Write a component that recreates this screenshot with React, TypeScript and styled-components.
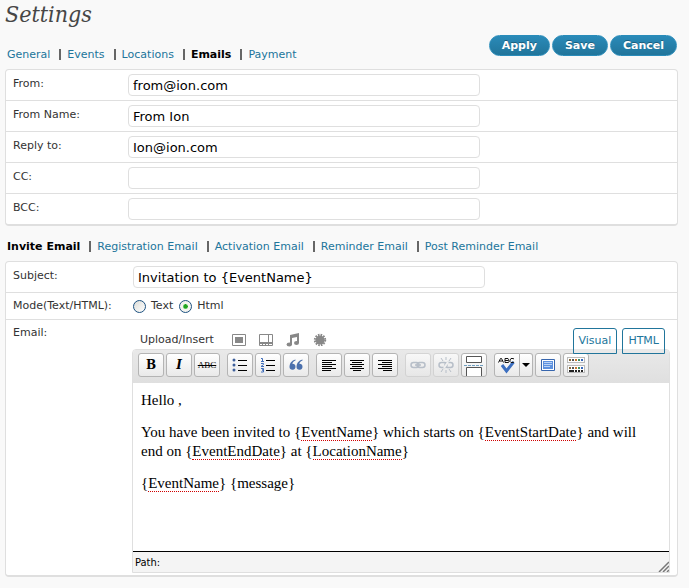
import React, { useState } from "react";
import styled, { createGlobalStyle, css } from "styled-components";

const ui = '"DejaVu Sans", Verdana, sans-serif';
const serif = '"Liberation Serif", Georgia, serif';
const line = "#dfdfdf";
const link = "#21759b";

const GlobalStyle = createGlobalStyle`
  *, *::before, *::after { box-sizing: border-box; }
  body { margin: 0; background: #f9f9f9; color: #333; font: 11px/16px ${ui}; }
`;

const Page = styled.main`
  padding: 0 11px 10px 5px;
`;

const Title = styled.h1`
  margin: 0;
  height: 30px;
  font: italic 23px/28px "DejaVu Serif Condensed", "DejaVu Serif", Georgia, serif;
  color: #464646;
`;

const Header = styled.div`
  display: flex;
  align-items: flex-start;
  justify-content: space-between;
  height: 39px;
  padding-top: 5px;
`;

const Tabs = styled.nav<{ $spaced?: boolean }>`
  display: flex;
  flex-wrap: wrap;
  padding: ${(p) => (p.$spaced ? "13px 2px 6px" : "12px 2px 0")};
`;

const TabItem = styled.span`
  & + &::before {
    content: "";
    display: inline-block;
    width: 2px;
    height: 11px;
    margin: 0 6px 0 9px;
    vertical-align: -2px;
    background: #666;
  }
`;

const TabLink = styled.a<{ $current?: boolean }>`
  color: ${(p) => (p.$current ? "#000" : link)};
  font-weight: ${(p) => (p.$current ? 700 : 400)};
  text-decoration: none;
`;

const Actions = styled.div`
  display: flex;
  gap: 2px;
  padding-right: 1px;
`;

const ActionButton = styled.button`
  height: 21px;
  padding: 0 12px;
  border: 1px solid #298cba;
  border-radius: 11px;
  background: linear-gradient(#2a8ab8, #21759b);
  color: #fff;
  font: bold 11px/19px ${ui};
  text-shadow: 0 -1px 0 rgba(0, 0, 0, 0.3);
`;

const Panel = styled.section`
  border: 1px solid ${line};
  border-bottom-width: 2px;
  border-radius: 4px;
  background: #fff;
`;

const columns = { field: "115px", wide: "120px", radio: "120px", editor: "119px" };
const insets = { field: "4px 7px", wide: "4px 7px", radio: "4px 7px", editor: "4px 7px 2px" };

const Row = styled.div<{ $kind: keyof typeof columns }>`
  display: grid;
  grid-template-columns: ${(p) => columns[p.$kind]} minmax(0, 1fr);
  padding: ${(p) => insets[p.$kind]};
  & + & { border-top: 1px solid ${line}; }
`;

const labelText = css`
  line-height: 18px;
`;
const Label = styled.label`
  line-height: 20px;
`;
const Caption = styled.span`${labelText}`;

const TextInput = styled.input`
  width: 100%;
  max-width: 352px;
  height: 22px;
  padding: 0 4px;
  border: 1px solid ${line};
  border-radius: 4px;
  background: #fff;
  color: #000;
  font: 13px/18px ${ui};
`;

const RadioGroup = styled.div`
  display: flex;
  align-items: center;
  gap: 6px;
  height: 18px;
`;

const RadioLabel = styled.label`
  display: flex;
  align-items: center;
  gap: 5px;
`;

const Radio = styled.input`
  appearance: none;
  width: 13px;
  height: 13px;
  margin: 0;
  border: 1px solid #1c5180;
  border-radius: 50%;
  background: linear-gradient(135deg, #dcdcd7, #fff);
  &:checked {
    background: radial-gradient(circle, #21a121 0 2px, #55c955 2px, #f3f3ef 3px);
  }
`;

const Media = styled.div`
  display: flex;
  align-items: flex-start;
  justify-content: space-between;
  height: 25px;
  padding: 4px 5px 0 8px;
`;

const Uploads = styled.div`
  display: flex;
  align-items: center;
  gap: 13px;
  padding-top: 4px;
`;

const UploadTitle = styled.span`
  min-width: 79px;
`;

const UploadButton = styled.button`
  width: 14px;
  height: 14px;
  padding: 0;
  border: 0;
  background: none;
  color: #888;
  svg { display: block; }
`;

const ModeTabs = styled.div`
  display: flex;
  gap: 5px;
  z-index: 1;
`;

const ModeTab = styled.button`
  height: 26px;
  padding: 0 5px;
  border: 1px solid ${link};
  border-radius: 3px 3px 0 0;
  background: linear-gradient(#fff 0 20px, #e9e9e9 20px);
  color: ${link};
  font: 11px/24px ${ui};
`;

const Frame = styled.div`
  border: 1px solid ${line};
  border-radius: 4px 4px 0 0;
`;

const Toolbar = styled.div`
  display: flex;
  gap: 7px;
  padding: 3px 5px 6px;
  border-radius: 3px 3px 0 0;
  background: linear-gradient(#e9e9e9, #dfdfdf);
`;

const ToolGroup = styled.div`
  display: flex;
  gap: 2px;
`;

const Tool = styled.button`
  display: grid;
  place-items: center;
  width: 26px;
  height: 24px;
  padding: 0;
  border: 1px solid #b4b4b4;
  border-radius: 3px;
  background: linear-gradient(#fff, #e9e9e9);
  color: #000;
  &:disabled { border-color: #ccc; opacity: 0.7; }
`;

const Split = styled.div`
  display: flex;
  ${Tool}:first-child { border-radius: 3px 0 0 3px; }
  ${Tool}:last-child { width: 13px; border-left: 0; border-radius: 0 3px 3px 0; }
`;

const Glyph = styled.span<{ $kind: "bold" | "italic" | "strike" }>`
  font: ${(p) =>
    p.$kind === "strike" ? `9px/14px ${serif}` : `bold ${p.$kind === "italic" ? "italic " : ""}12px/14px "DejaVu Serif", serif`};
  text-decoration: ${(p) => (p.$kind === "strike" ? "line-through" : "none")};
`;

const Body = styled.div`
  min-height: 169px;
  padding: 8px;
  border-bottom: 1px solid #000;
  color: #000;
  font: 15px/19px ${serif};
  outline: none;
  p { margin: 0 0 13px; }
`;

const Flagged = styled.span`
  border-bottom: 1px dotted #d00000;
`;

const Status = styled.div`
  display: flex;
  align-items: flex-end;
  justify-content: space-between;
  height: 20px;
  padding-left: 2px;
  background: #f4f4f4;
  color: #000;
  font: 11px/19px "DejaVu Sans Condensed", Tahoma, sans-serif;
  svg { display: block; }
`;

const mediaIcons = [
  ["Add an image", <><path d="M.5 1.500h13v11H.5z" fill="none" stroke="currentColor" /><path d="M3 4h8v6H3z" fill="currentColor" /></>],
  ["Add video", <><path d="M.5 1.500h13v11H.5zM9.500 1.500v8M.5 9.500h13M3.500 9.500v3M6.500 9.500v3M9.500 9.500v3" fill="none" stroke="currentColor" /><path d="M0 9h14v2H0z" fill="currentColor" /></>],
  ["Add audio", <><path d="M4 2l9-2v10H11V4L6 5v7H4z" fill="currentColor" /><ellipse cx="3.3" cy="11.5" rx="2.7" ry="2" fill="currentColor" /><ellipse cx="10.5" cy="10" rx="2.5" ry="2" fill="currentColor" /></>],
  ["Add media", <><circle cx="7" cy="7" r="4.6" fill="currentColor" /><circle cx="7" cy="7" r="5.2" fill="none" stroke="currentColor" strokeWidth="2" strokeDasharray="1.6 1.12" /></>],
] as const;

const Lines = ({ d }: { d: string }) => (
  <svg width="16" height="14" viewBox="0 0 16 14"><path d={d} stroke="#000" fill="none" /></svg>
);

const BulletIcon = () => (
  <svg width="16" height="16" viewBox="0 0 16 16">
    <path d="M6 3.500h9M6 8.500h9M6 13.500h9" stroke="#000" />
    <g fill="#3d5f9b"><circle cx="2" cy="3" r="1.5" /><circle cx="2" cy="8" r="1.5" /><circle cx="2" cy="13" r="1.5" /></g>
  </svg>
);

const NumberIcon = () => (
  <svg width="16" height="16" viewBox="0 0 16 16">
    <path d="M6 3.500h9M6 8.500h9M6 13.500h9" stroke="#000" />
    <path d="M1 1.500h1.500V4M1 4.500h3M1 6.500h2.500v1L1 9.500h3M1 11.500h2.500v1.500H2h1.500v2H1" stroke="#3f6dba" fill="none" />
  </svg>
);

const QuoteIcon = () => (
  <svg width="16" height="14" viewBox="0 0 16 14" fill="#4b70ad">
    <path d="M7.500 1.500C3.500 2.500 1.500 5.500 1.500 9a3 3 0 1 0 2.800-3.200C4.500 4.200 6 3 7.500 2.500zM14.500 1.500c-4 1-6 4-6 7.500a3 3 0 1 0 2.800-3.200C11.500 4.200 13 3 14.500 2.500z" />
  </svg>
);

const LinkIcon = ({ broken }: { broken?: boolean }) => (
  <svg width="18" height="18" viewBox="0 0 18 18" fill="none" stroke="#a4afbd" strokeWidth="1.500">
    <rect x="2" y="6.500" width="8" height="5" rx="2.500" />
    <rect x="8" y="6.500" width="8" height="5" rx="2.500" />
    {broken ? (
      <>
        <path d="M7 12l4-6" stroke="#f5f5f5" strokeWidth="2" />
        <path d="M9 1v3M4 2l2 3M14 2l-2 3M9 14v3M4 16l2-3M14 16l-2-3" strokeWidth="1" />
      </>
    ) : (
      <path d="M6 9h6" />
    )}
  </svg>
);

const MoreIcon = () => (
  <svg width="22" height="22" viewBox="0 0 22 22" fill="none">
    <path d="M3.500 2.500h15v6h-15zM3.500 22v-8.500h15V22" fill="#fff" stroke="#555" />
    <path d="M1 11.500h20" stroke="#6f9fc0" strokeDasharray="3 1" />
  </svg>
);

const SpellIcon = () => (
  <svg width="20" height="18" viewBox="0 0 20 18" fill="none">
    <path d="M5 9l4.500 6L16.500 6" stroke="#3c6fc0" strokeWidth="3" />
    <path d="M1.500 6.500l2-4h1l2 4M2.500 5h3M8 2.500v4M8 2.500h3l.5 1-.5 1H8h3.500l.5 1-.5 1H8M17 3l-1-.5h-2L13 4v1.500l1 1h2l1-.5" stroke="#111" />
  </svg>
);

const FullscreenIcon = () => (
  <svg width="16" height="14" viewBox="0 0 16 14">
    <path d="M1.500 1.500h13v11h-13z" fill="#fff" stroke="#3665ad" />
    <path d="M3 3h10v8H3z" fill="#5d91df" />
    <path d="M4 4.500h8M4 6.500h8M4 8.500h6" stroke="#b9d2f5" />
  </svg>
);

const swatches = ["#8a6a3c", "#555", "#c8742c", "#3f8f5f", "#3566b8"];

const SinkIcon = () => (
  <svg width="18" height="18" viewBox="0 0 18 18">
    <rect x=".5" y="1.500" width="17" height="5" fill="#fff" stroke="#bbb" />
    <rect x=".5" y="9.500" width="17" height="7" fill="#fff" stroke="#bbb" />
    {swatches.map((fill, i) => (
      <g key={fill} fill={fill}>
        <rect x={2 + i * 3} y="3" width="2" height="2" />
        <rect x={2 + i * 3} y="11" width="2" height="2" />
      </g>
    ))}
    <path d="M2 14h5v2H2zM8 14h2v2H8zM11 14h2v2h-2zM14 14h2v2h-2z" fill="#222" />
  </svg>
);

const toolGroups: { name: string; icon: React.ReactNode; off?: boolean }[][] = [
  [
    { name: "Bold", icon: <Glyph $kind="bold">B</Glyph> },
    { name: "Italic", icon: <Glyph $kind="italic">I</Glyph> },
    { name: "Strikethrough", icon: <Glyph $kind="strike">ABC</Glyph> },
  ],
  [
    { name: "Bulleted list", icon: <BulletIcon /> },
    { name: "Numbered list", icon: <NumberIcon /> },
    { name: "Blockquote", icon: <QuoteIcon /> },
  ],
  [
    { name: "Align left", icon: <Lines d="M1 2.500h14M1 4.500h10M1 6.500h14M1 8.500h10M1 10.500h14M1 12.500h9" /> },
    { name: "Align center", icon: <Lines d="M1 2.500h14M3 4.500h10M1 6.500h14M3 8.500h10M1 10.500h14M4 12.500h8" /> },
    { name: "Align right", icon: <Lines d="M1 2.500h14M5 4.500h10M1 6.500h14M5 8.500h10M1 10.500h14M6 12.500h9" /> },
  ],
  [
    { name: "Insert link", icon: <LinkIcon />, off: true },
    { name: "Unlink", icon: <LinkIcon broken />, off: true },
    { name: "Insert More tag", icon: <MoreIcon /> },
  ],
];

const senderFields = [
  ["from", "From:", "from@ion.com"],
  ["from-name", "From Name:", "From Ion"],
  ["reply-to", "Reply to:", "Ion@ion.com"],
  ["cc", "CC:", ""],
  ["bcc", "BCC:", ""],
];

function TabBar({ items, current, spaced }: { items: string[]; current: string; spaced?: boolean }) {
  return (
    <Tabs $spaced={spaced}>
      {items.map((item) => (
        <TabItem key={item}>
          <TabLink href="#" $current={item === current}>{item}</TabLink>
        </TabItem>
      ))}
    </Tabs>
  );
}

export default function App() {
  const [mode, setMode] = useState("Html");
  return (
    <>
      <GlobalStyle />
      <Page>
        <Title>Settings</Title>
        <Header>
          <TabBar items={["General", "Events", "Locations", "Emails", "Payment"]} current="Emails" />
          <Actions>
            {["Apply", "Save", "Cancel"].map((name) => (
              <ActionButton key={name} type="button">{name}</ActionButton>
            ))}
          </Actions>
        </Header>
        <Panel>
          {senderFields.map(([id, label, value]) => (
            <Row key={id} $kind="field">
              <Label htmlFor={id}>{label}</Label>
              <TextInput id={id} defaultValue={value} />
            </Row>
          ))}
        </Panel>
        <TabBar
          spaced
          items={["Invite Email", "Registration Email", "Activation Email", "Reminder Email", "Post Reminder Email"]}
          current="Invite Email"
        />
        <Panel>
          <Row $kind="wide">
            <Label htmlFor="subject">Subject:</Label>
            <TextInput id="subject" defaultValue="Invitation to {EventName}" />
          </Row>
          <Row $kind="radio">
            <Caption id="mode">Mode(Text/HTML):</Caption>
            <RadioGroup role="radiogroup" aria-labelledby="mode">
              {["Text", "Html"].map((m) => (
                <RadioLabel key={m}>
                  <Radio type="radio" name="mode" checked={mode === m} onChange={() => setMode(m)} />
                  {m}
                </RadioLabel>
              ))}
            </RadioGroup>
          </Row>
          <Row $kind="editor">
            <Caption id="email">Email:</Caption>
            <div>
              <Media>
                <Uploads>
                  <UploadTitle>Upload/Insert</UploadTitle>
                  {mediaIcons.map(([name, art]) => (
                    <UploadButton key={name} type="button" aria-label={name}>
                      <svg width="14" height="14" viewBox="0 0 14 14">{art}</svg>
                    </UploadButton>
                  ))}
                </Uploads>
                <ModeTabs>
                  <ModeTab type="button">Visual</ModeTab>
                  <ModeTab type="button">HTML</ModeTab>
                </ModeTabs>
              </Media>
              <Frame>
                <Toolbar role="toolbar">
                  {toolGroups.map((group) => (
                    <ToolGroup key={group[0].name}>
                      {group.map((t) => (
                        <Tool key={t.name} type="button" aria-label={t.name} disabled={t.off}>{t.icon}</Tool>
                      ))}
                    </ToolGroup>
                  ))}
                  <ToolGroup>
                    <Split>
                      <Tool type="button" aria-label="Check spelling"><SpellIcon /></Tool>
                      <Tool type="button" aria-label="Spelling language">
                        <svg width="8" height="4" viewBox="0 0 8 4"><path d="M0 0h8L4 4z" /></svg>
                      </Tool>
                    </Split>
                    <Tool type="button" aria-label="Full screen"><FullscreenIcon /></Tool>
                    <Tool type="button" aria-label="Kitchen sink"><SinkIcon /></Tool>
                  </ToolGroup>
                </Toolbar>
                <Body role="textbox" aria-labelledby="email" contentEditable suppressContentEditableWarning spellCheck={false}>
                  <p>Hello ,</p>
                  <p>
                    {"You have been invited to {"}<Flagged>EventName</Flagged>{"} which starts on {"}
                    <Flagged>EventStartDate</Flagged>{"} and will "}{"end on {"}<Flagged>EventEndDate</Flagged>{"} at {"}
                    <Flagged>LocationName</Flagged>{"}"}
                  </p>
                  <p>{"{"}<Flagged>EventName</Flagged>{"} {message}"}</p>
                </Body>
                <Status>
                  Path:
                  <svg width="11" height="11" viewBox="0 0 11 11">
                    <path d="M1 11L11 1M5 11l6-6M9 11l2-2" stroke="#777" strokeWidth="1.500" />
                  </svg>
                </Status>
              </Frame>
            </div>
          </Row>
        </Panel>
      </Page>
    </>
  );
}
